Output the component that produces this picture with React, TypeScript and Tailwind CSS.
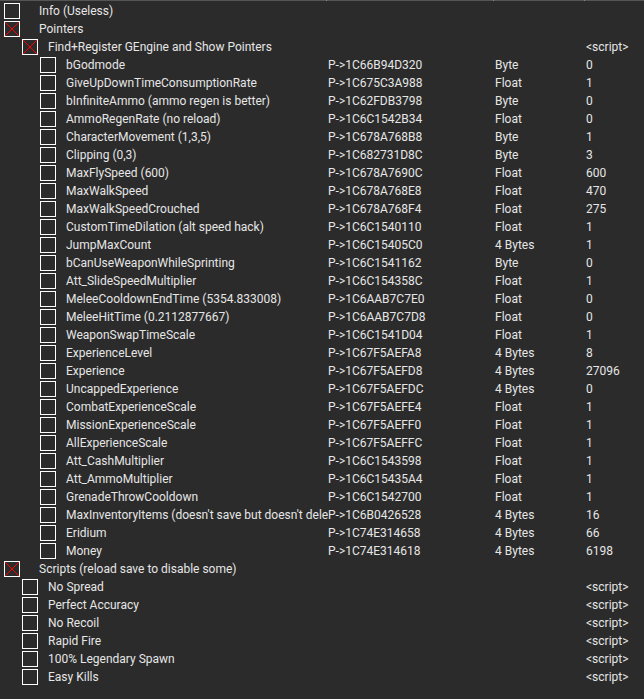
import React from "react";

type Row = { name: string; addr?: string; type?: string; value?: string; level: number; on?: boolean };

const pointers: [string, string, string, string][] = [
  ["bGodmode", "P->1C66B94D320", "Byte", "0"],
  ["GiveUpDownTimeConsumptionRate", "P->1C675C3A988", "Float", "1"],
  ["bInfiniteAmmo (ammo regen is better)", "P->1C62FDB3798", "Byte", "0"],
  ["AmmoRegenRate (no reload)", "P->1C6C1542B34", "Float", "0"],
  ["CharacterMovement (1,3,5)", "P->1C678A768B8", "Byte", "1"],
  ["Clipping (0,3)", "P->1C682731D8C", "Byte", "3"],
  ["MaxFlySpeed (600)", "P->1C678A7690C", "Float", "600"],
  ["MaxWalkSpeed", "P->1C678A768E8", "Float", "470"],
  ["MaxWalkSpeedCrouched", "P->1C678A768F4", "Float", "275"],
  ["CustomTimeDilation (alt speed hack)", "P->1C6C1540110", "Float", "1"],
  ["JumpMaxCount", "P->1C6C15405C0", "4 Bytes", "1"],
  ["bCanUseWeaponWhileSprinting", "P->1C6C1541162", "Byte", "0"],
  ["Att_SlideSpeedMultiplier", "P->1C6C154358C", "Float", "1"],
  ["MeleeCooldownEndTime (5354.833008)", "P->1C6AAB7C7E0", "Float", "0"],
  ["MeleeHitTime (0.2112877667)", "P->1C6AAB7C7D8", "Float", "0"],
  ["WeaponSwapTimeScale", "P->1C6C1541D04", "Float", "1"],
  ["ExperienceLevel", "P->1C67F5AEFA8", "4 Bytes", "8"],
  ["Experience", "P->1C67F5AEFD8", "4 Bytes", "27096"],
  ["UncappedExperience", "P->1C67F5AEFDC", "4 Bytes", "0"],
  ["CombatExperienceScale", "P->1C67F5AEFE4", "Float", "1"],
  ["MissionExperienceScale", "P->1C67F5AEFF0", "Float", "1"],
  ["AllExperienceScale", "P->1C67F5AEFFC", "Float", "1"],
  ["Att_CashMultiplier", "P->1C6C1543598", "Float", "1"],
  ["Att_AmmoMultiplier", "P->1C6C15435A4", "Float", "1"],
  ["GrenadeThrowCooldown", "P->1C6C1542700", "Float", "1"],
  ["MaxInventoryItems (doesn't save but doesn't dele", "P->1C6B0426528", "4 Bytes", "16"],
  ["Eridium", "P->1C74E314658", "4 Bytes", "66"],
  ["Money", "P->1C74E314618", "4 Bytes", "6198"],
];

const scripts = ["No Spread", "Perfect Accuracy", "No Recoil", "Rapid Fire", "100% Legendary Spawn", "Easy Kills"];

const rows: Row[] = [
  { name: "Info (Useless)", level: 0 },
  { name: "Pointers", level: 0, on: true },
  { name: "Find+Register GEngine and Show Pointers", level: 1, on: true, value: "<script>" },
  ...pointers.map(([name, addr, type, value]) => ({ name, addr, type, value, level: 2 })),
  { name: "Scripts (reload save to disable some)", level: 0, on: true },
  ...scripts.map((name) => ({ name, level: 1, value: "<script>" })),
];

function Box({ on }: { on?: boolean }) {
  return (
    <div className="w-4 h-4 border border-white shrink-0">
      {on && (
        <svg width="14" height="14" viewBox="0 0 14 14" className="block">
          <path d="M0 0L14 14M14 0L0 14" stroke="#ff0000" strokeWidth="1" />
        </svg>
      )}
    </div>
  );
}

function TableRow({ row }: { row: Row }) {
  const indent = row.level === 0 ? "pl-1" : row.level === 1 ? "pl-[22px]" : "pl-10";
  const gap = row.level === 0 ? "w-[19px]" : "w-[10px]";
  return (
    <div className="flex h-[18px] items-center text-[12px] text-[#e6e6e6] whitespace-nowrap">
      <div className={`flex items-center w-[328px] shrink-0 overflow-hidden ${indent}`}>
        <Box on={row.on} />
        <div className={`${gap} shrink-0`} />
        <span>{row.name}</span>
      </div>
      <div className="w-[167px] shrink-0">{row.addr}</div>
      <div className="w-[91px] shrink-0">{row.type}</div>
      <div>{row.value}</div>
    </div>
  );
}

export default function App() {
  return (
    <div className="w-[644px] h-[699px] bg-[#2b2b2b] font-['Roboto',sans-serif] overflow-hidden">
      {/* header strip, only the column ticks are visible */}
      <div className="flex h-px bg-[#555555]">
        <div className="w-[326px] shrink-0" />
        <div className="w-px bg-[#888888] shrink-0" />
        <div className="w-[166px] shrink-0" />
        <div className="w-px bg-[#888888] shrink-0" />
        <div className="w-[90px] shrink-0" />
        <div className="w-px bg-[#888888] shrink-0" />
      </div>
      <div className="pt-[1px]">
        {rows.map((r, i) => (
          <TableRow key={i} row={r} />
        ))}
      </div>
    </div>
  );
}
